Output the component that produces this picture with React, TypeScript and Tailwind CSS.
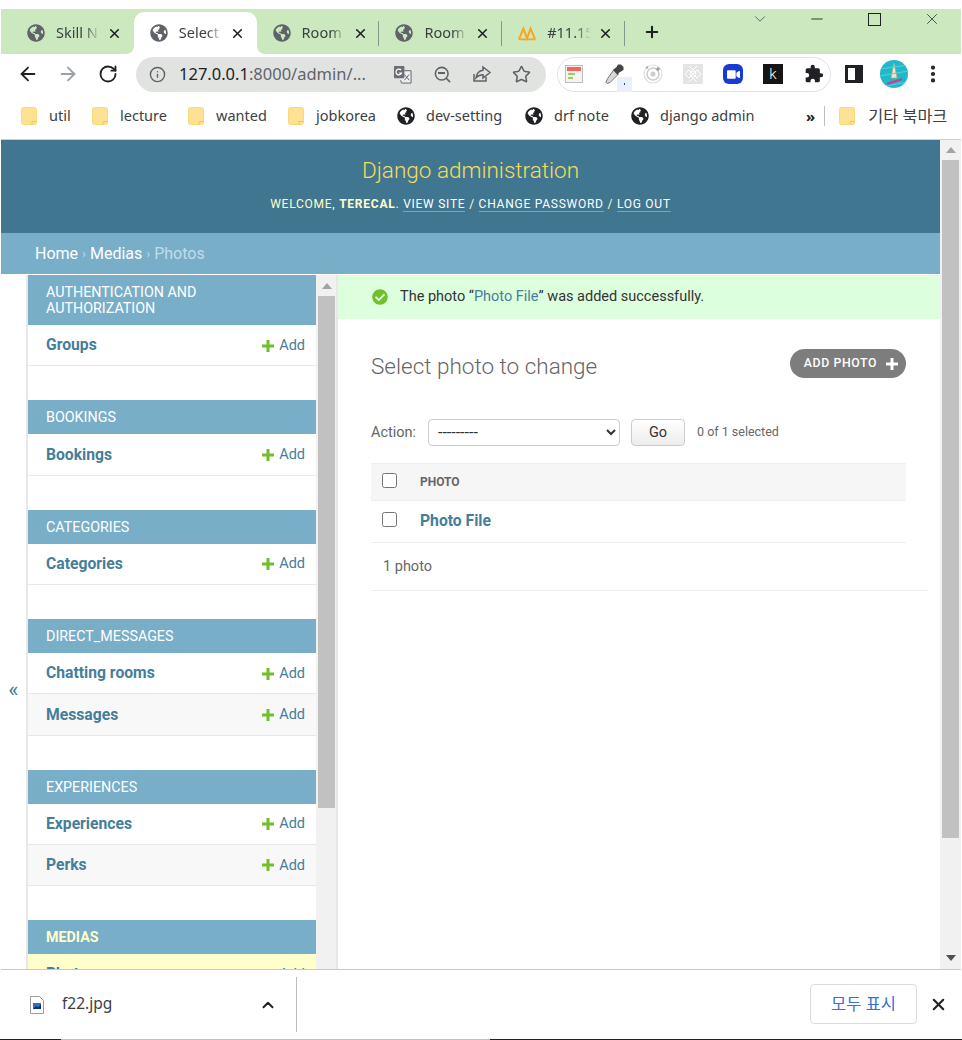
import React from "react";
import { ArrowLeft, ArrowRight, RotateCw, Info, Search, Star, EllipsisVertical, X, Plus, ChevronUp, ChevronDown, Minus } from "lucide-react";
import { FaGlobeAmericas, FaVideo, FaCheckCircle } from "react-icons/fa";

const chromeFont = "font-['Noto_Sans','Noto_Sans_CJK_KR',sans-serif]";
const roboto = "font-['Roboto','Liberation_Sans',sans-serif]";

function Tab({ label, active, icon, divider }: { label: string; active?: boolean; icon?: React.ReactNode; divider?: boolean }) {
  return (
    <div className={`relative flex items-center h-[42px] w-[122.8px] pl-4 rounded-t-[10px] ${active ? "bg-white" : ""}`}>
      {active && (
        <>
          <div className="absolute bottom-0 -left-2 w-2 h-2 bg-white">
            <div className="w-2 h-2 bg-[#cbe8bf] rounded-br-[8px]" />
          </div>
          <div className="absolute bottom-0 -right-2 w-2 h-2 bg-white">
            <div className="w-2 h-2 bg-[#cbe8bf] rounded-bl-[8px]" />
          </div>
        </>
      )}
      <div className="w-[18px] h-[18px] flex items-center justify-center shrink-0">
        {icon ?? <FaGlobeAmericas className="w-[18px] h-[18px] text-[#5f6368]" />}
      </div>
      <span className="ml-[11px] w-[44px] whitespace-nowrap overflow-hidden text-[14.5px] text-[#3c4043] [mask-image:linear-gradient(to_right,black_65%,transparent)]">
        {label}
      </span>
      <X className="ml-[7px] w-[15px] h-[15px] text-[#202124]" strokeWidth={2.6} />
      {divider && <div className="absolute right-0 top-[9px] h-[25px] w-px bg-[#85988a]" />}
    </div>
  );
}

function Folder() {
  return (
    <svg viewBox="0 0 16 18" className="w-4 h-[18px] shrink-0">
      <rect x="0.5" y="0.5" width="15" height="17" rx="2" fill="#fde293" stroke="#f9d77a" />
      <path d="M11 17.5v-3h4.5" fill="none" stroke="#f5c842" />
    </svg>
  );
}

function BM({ label, globe, w }: { label: string; globe?: boolean; w: string }) {
  return (
    <div className={`flex items-center shrink-0 ${w}`}>
      {globe ? <FaGlobeAmericas className="w-[18px] h-[18px] text-[#202124] shrink-0" /> : <Folder />}
      <span className={`${globe ? "ml-[11px]" : "ml-3"} text-[14.5px] text-[#3c4043] whitespace-nowrap`}>{label}</span>
    </div>
  );
}

function AddPlus({ color = "#70bf2b" }: { color?: string }) {
  return (
    <svg viewBox="0 0 12 12" className="w-3 h-3 shrink-0">
      <path d="M4.5 0h3v4.5H12v3H7.5V12h-3V7.5H0v-3h4.5z" fill={color} />
    </svg>
  );
}

function Row({ label, alt }: { label: string; alt?: boolean }) {
  return (
    <div className={`h-[41.2px] shrink-0 flex items-center justify-between pl-[18px] pr-[11px] border-b border-[#e8e8e8] ${alt ? "bg-[#f8f8f8]" : "bg-white"}`}>
      <span className="text-[15.7px] font-bold text-[#447e9b] leading-none">{label}</span>
      <span className="flex items-center gap-[5px] text-[14.5px] text-[#447e9b] mt-px">
        <AddPlus />
        Add
      </span>
    </div>
  );
}

function Caption({ children, tall, current }: { children: React.ReactNode; tall?: boolean; current?: boolean }) {
  return (
    <div className={`shrink-0 bg-[#79aec8] pl-[18px] pr-4 flex items-center text-[14.3px] leading-[16px] ${tall ? "h-[50px]" : "h-[34px]"} ${current ? "font-bold text-[#ffc]" : "text-white"}`}>
      <span>{children}</span>
    </div>
  );
}

function Module({ caption, rows, tall }: { caption: string; rows: string[]; tall?: boolean }) {
  return (
    <div className="shrink-0 mb-[34.2px]">
      <Caption tall={tall}>{caption}</Caption>
      {rows.map((r, i) => (
        <Row key={r} label={r} alt={i % 2 === 1} />
      ))}
    </div>
  );
}

function Arrow({ dir, color = "#a3a3a3" }: { dir: "up" | "down"; color?: string }) {
  return (
    <svg viewBox="0 0 10 6" className="w-[10px] h-[6px]">
      <path d={dir === "up" ? "M5 0l5 6H0z" : "M5 6L0 0h10z"} fill={color} />
    </svg>
  );
}

export default function App() {
  return (
    <div className={`w-[962px] h-[1040px] bg-white flex flex-col overflow-hidden ${chromeFont}`}>
      {/* Tab strip */}
      <div className="mt-[9px] ml-px mr-px h-[45px] shrink-0 bg-[#cbe8bf] flex items-end pl-[10px] relative">
        <Tab label="Skill N" />
        <Tab label="Select" active />
        <Tab label="Room" divider />
        <Tab label="Room" divider />
        <Tab
          label="#11.15"
          divider
          icon={
            <svg viewBox="0 0 20 15" className="w-[19px] h-[15px]">
              <path d="M1 14L6 2l4 11 4-11 5 12" fill="none" stroke="#f5a623" strokeWidth="2.2" />
              <path d="M1 14h18" stroke="#f5a623" strokeWidth="2" />
            </svg>
          }
        />
        <Plus className="ml-[18px] mb-[13px] w-[18px] h-[18px] text-[#202124]" strokeWidth={2.8} />
        <div className="absolute top-px left-[750px] flex items-center">
          <ChevronDown className="w-[18px] h-[18px] text-[#3c4043]" strokeWidth={1} />
          <Minus className="ml-[39px] w-[18px] h-[18px] text-[#202124]" strokeWidth={1.2} />
          <div className="ml-[42px] w-[13px] h-[13px] border border-[#202124]" />
          <X className="ml-[42px] w-[18px] h-[18px] text-[#202124]" strokeWidth={1} />
        </div>
      </div>

      {/* Toolbar */}
      <div className="h-[40px] shrink-0 ml-px mr-px flex items-center pl-[16px]">
        <ArrowLeft className="w-[22px] h-[22px] text-[#202124]" strokeWidth={2} />
        <ArrowRight className="ml-[18px] w-[22px] h-[22px] text-[#9aa0a6]" strokeWidth={2} />
        <RotateCw className="ml-[19px] w-[20px] h-[20px] text-[#202124]" strokeWidth={2.2} />
        <div className="ml-[18px] w-[410px] h-[35px] rounded-full bg-[#e1e3e1] flex items-center pl-[13px]">
          <Info className="w-[17px] h-[17px] text-[#5f6368] shrink-0" strokeWidth={2} />
          <span className="ml-[13px] text-[16.5px] text-[#5f6368] whitespace-nowrap w-[214px] shrink-0">
            <span className="text-[#202124]">127.0.0.1</span>:8000/admin/...
          </span>
          <svg viewBox="0 0 20 20" className="w-[19px] h-[19px] shrink-0">
            <path d="M8 6h11v13H9l-1-3" fill="#eceff0" stroke="#5f6368" />
            <rect x="1" y="1" width="11" height="13" rx="1" fill="#6b6f73" />
            <path d="M8.5 5.5a3 3 0 1 0 .4 3H6.5" fill="none" stroke="#fff" strokeWidth="1.3" />
            <path d="M12 10l5 6M17 10l-5 6" stroke="#5f6368" strokeWidth="1" />
          </svg>
          <span className="ml-[21px] relative flex shrink-0">
            <Search className="w-[19px] h-[19px] text-[#5f6368]" strokeWidth={2} />
            <span className="absolute left-[5px] top-[7.5px] w-[7px] h-[1.5px] bg-[#5f6368]" />
          </span>
          <svg viewBox="0 0 20 20" className="ml-[20px] w-[20px] h-[20px] shrink-0" fill="none" stroke="#5f6368" strokeWidth="1.5">
            <path d="M2 10v7h12v-4" />
            <path d="M11 3l7 5.5-7 5.5v-3.2c-3 0-5 .8-7 3 .6-4 3-7 7-7.5z" />
          </svg>
          <Star className="ml-[20px] w-[19px] h-[19px] text-[#5f6368] shrink-0" strokeWidth={2} />
        </div>
        <div className="ml-[11px] w-[274px] h-[35px] rounded-full border border-[#dfe1e5] flex items-center pl-[7px] relative shrink-0">
          <svg viewBox="0 0 18 18" className="w-[18px] h-[18px] shrink-0">
            <rect x="0.5" y="0.5" width="17" height="17" fill="#f5f5f0" stroke="#bdbdbd" />
            <rect x="2" y="2" width="14" height="4" fill="#f4635b" />
            <rect x="3" y="8" width="7" height="2" fill="#9ccc65" />
            <rect x="3" y="12" width="5" height="2" fill="#9ccc65" />
          </svg>
          <svg viewBox="0 0 20 20" className="ml-[21px] w-5 h-5 shrink-0">
            <path d="M10 5.5l4.5 4.5-8.5 8.5-3 1-1-1 1-3z" fill="#d8d8d8" stroke="#777" />
            <path d="M9 6l3.5-3 1.5-2.5h3L19.5 3v3L17 7.5l-2.5 1.5-1 2z" fill="#444" />
          </svg>
          <div className="absolute left-[59px] top-[19px] w-[15px] h-[15px] bg-[#e8f0fe] flex items-center justify-center">
            <div className="w-[1.5px] h-[1.5px] bg-[#444]" />
          </div>
          <svg viewBox="0 0 20 20" className="ml-[19px] w-5 h-5 shrink-0" fill="none">
            <circle cx="10" cy="10" r="9" stroke="#ddd" strokeWidth="1.2" />
            <circle cx="10" cy="10" r="6" stroke="#ccc" strokeWidth="1.5" />
            <circle cx="10" cy="10" r="2.5" fill="#ccc" />
            <circle cx="15" cy="5" r="1.7" fill="#999" />
            <circle cx="4" cy="3.5" r="1.2" fill="#aaa" />
          </svg>
          <svg viewBox="0 0 20 20" className="ml-[20px] w-5 h-5 shrink-0">
            <rect width="20" height="20" fill="#e4e4e4" />
            <circle cx="10" cy="10" r="3" fill="none" stroke="#fff" />
            <path d="M2 10l4-4 4 4 4-4 4 4-4 4-4-4-4 4zM6 2l4 4 4-4M6 18l4-4 4 4" fill="none" stroke="#fff" />
          </svg>
          <div className="ml-[20px] w-5 h-5 rounded-[6px] bg-[#1a3bd1] flex items-center justify-center shrink-0">
            <FaVideo className="w-[13px] h-[13px] text-white" />
          </div>
          <div className={`ml-[20px] w-5 h-5 bg-[#151515] flex items-center justify-center shrink-0 text-white text-[15px] leading-none ${roboto} font-light`}>k</div>
          <svg viewBox="0 0 24 24" className="ml-[21px] w-5 h-5 shrink-0" fill="#202124">
            <path d="M20.5 11H19V7a2 2 0 0 0-2-2h-4V3.5a2.5 2.5 0 0 0-5 0V5H4a2 2 0 0 0-2 2v3.8h1.5a2.7 2.7 0 0 1 0 5.4H2V20a2 2 0 0 0 2 2h3.8v-1.5a2.7 2.7 0 0 1 5.4 0V22H17a2 2 0 0 0 2-2v-4h1.5a2.5 2.5 0 0 0 0-5z" />
          </svg>
        </div>
        <div className="ml-[14px] w-[18px] h-[18px] border-[3px] border-[#202124] flex justify-end shrink-0">
          <div className="w-[5px] h-full bg-[#202124]" />
        </div>
        <div className="ml-[17px] w-7 h-7 rounded-full bg-[#22b8c9] overflow-hidden shrink-0">
          <svg viewBox="0 0 28 28" className="w-7 h-7">
            <path d="M14 3l3 15h-6z" fill="#f0e6c8" stroke="#c9a45c" strokeWidth="0.6" />
            <path d="M7 24l15-5" stroke="#d6358f" strokeWidth="2" />
            <path d="M0 9l28-4M0 16l28-5M0 27l28-5" stroke="#4fd3df" strokeWidth="1" />
          </svg>
        </div>
        <EllipsisVertical className="ml-[14px] w-[22px] h-[22px] text-[#202124] shrink-0" strokeWidth={2.6} />
      </div>

      {/* Bookmarks */}
      <div className="h-[46px] shrink-0 ml-px mr-px flex items-center pl-[20px] border-b border-[#cfcfcf] pb-[1px]">
        <BM label="util" w="w-[71px]" />
        <BM label="lecture" w="w-[96px]" />
        <BM label="wanted" w="w-[100px]" />
        <BM label="jobkorea" w="w-[109px]" />
        <BM label="dev-setting" globe w="w-[128px]" />
        <BM label="drf note" globe w="w-[106px]" />
        <BM label="django admin" globe w="w-[175px]" />
        <span className="text-[15px] font-bold text-[#202124] leading-none">»</span>
        <div className="ml-[9px] w-px h-[20px] bg-[#bdbdbd]" />
        <div className="ml-[14px] flex items-center">
          <Folder />
          <span className="ml-[13px] text-[16.3px] leading-none text-[#3c4043] whitespace-nowrap">기타 북마크</span>
        </div>
      </div>

      {/* Page */}
      <div className={`flex-1 min-h-0 ml-px mr-px flex ${roboto}`}>
        <div className="flex-1 min-w-0 flex flex-col">
          <div className="h-[93px] shrink-0 bg-[#417690] flex flex-col items-center">
            <div className="mt-[15px] text-[22.5px] font-light text-[#f5dd5d] leading-[30px]">Django administration</div>
            <div className="mt-[11px] text-[12px] tracking-[0.75px] text-[#ffc] uppercase leading-[16px]">
              Welcome, <strong className="font-bold">terecal</strong>.{" "}
              <span className="border-b border-[#ffffff55] text-white">View site</span> /{" "}
              <span className="border-b border-[#ffffff55] text-white">Change password</span> /{" "}
              <span className="border-b border-[#ffffff55] text-white">Log out</span>
            </div>
          </div>
          <div className="h-[41px] shrink-0 bg-[#79aec8] flex items-center pl-[34px] text-[16px] text-[#c4dce8]">
            <span className="text-white">Home</span>
            <span className="mx-[4px] text-[13px]">›</span>
            <span className="text-white">Medias</span>
            <span className="mx-[4px] text-[13px]">›</span>
            Photos
          </div>
          <div className="flex-1 min-h-0 flex pt-px">
            {/* toggle */}
            <div className="w-[25px] shrink-0 border-r-2 border-[#e8e8e8] box-content flex items-center justify-center pt-[138px]">
              <span className="text-[22px] leading-none text-[#447e9b] -mt-[2px]">«</span>
            </div>
            {/* sidebar */}
            <div className="w-[288px] shrink-0 overflow-hidden flex flex-col">
              <Module tall caption="AUTHENTICATION AND AUTHORIZATION" rows={["Groups"]} />
              <Module caption="BOOKINGS" rows={["Bookings"]} />
              <Module caption="CATEGORIES" rows={["Categories"]} />
              <Module caption="DIRECT_MESSAGES" rows={["Chatting rooms", "Messages"]} />
              <Module caption="EXPERIENCES" rows={["Experiences", "Perks"]} />
              <Caption current>MEDIAS</Caption>
              <div className="h-[41px] shrink-0 bg-[#ffc] flex items-center justify-between pl-[18px] pr-[11px] pb-[1px]">
                <span className="text-[15.7px] font-bold text-[#447e9b] leading-none">Photos</span>
                <span className="flex items-center gap-[5px] text-[14.5px] text-[#447e9b] mt-px">
                  <AddPlus />
                  Add
                </span>
              </div>
            </div>
            {/* sidebar scrollbar */}
            <div className="w-[20px] shrink-0 bg-[#f1f1f1] flex flex-col items-center pl-px">
              <div className="h-[21px] shrink-0 flex items-center justify-center">
                <Arrow dir="up" />
              </div>
              <div className="w-[17px] h-[512px] bg-[#c1c1c1]" />
            </div>
            <div className="w-[2px] shrink-0 bg-[#e8e8e8]" />
            {/* content */}
            <div className="flex-1 min-w-0 flex flex-col">
              <div className="h-[44px] shrink-0 bg-[#dfd] flex items-center pl-[34px] text-[14.5px] text-[#333]">
                <FaCheckCircle className="w-4 h-4 text-[#70bf2b] mr-[12px]" />
                <span>
                  The photo “<span className="text-[#447e9b]">Photo File</span>” was added successfully.
                </span>
              </div>
              <div className="pl-[33px] pr-[12px] flex-1 flex flex-col">
                <div className="mt-[30px] pr-[22px] flex items-start justify-between">
                  <h1 className="mt-[1px] text-[22.5px] font-light text-[#666] leading-[32px]">Select photo to change</h1>
                  <div className="h-[29px] pl-[14px] pr-[8px] rounded-full bg-[#7d7d7d] flex items-center gap-[9px] text-[12.3px] font-medium tracking-[0.6px] text-white">
                    ADD PHOTO
                    <AddPlus color="#fff" />
                  </div>
                </div>
                <div className="mt-[37px] pr-[22px] flex items-center h-[27px]">
                  <span className="text-[14.5px] text-[#666] w-[57px] shrink-0">Action:</span>
                  <select className="w-[192px] h-[27px] bg-white border border-[#ccc] rounded-[4px] pl-[5px] text-[16px] text-[#333]">
                    <option>---------</option>
                  </select>
                  <div className="ml-[11px] w-[54px] h-[27px] rounded-[4px] border border-[#ccc] bg-gradient-to-b from-[#fff] to-[#ececec] flex items-center justify-center text-[14.5px] text-[#333]">
                    Go
                  </div>
                  <span className="ml-[12px] text-[12.5px] text-[#666]">0 of 1 selected</span>
                </div>
                <div className="mt-[17px] mr-[22px] h-[38px] shrink-0 bg-[#f6f6f6] border-y border-[#eee] flex items-center pl-[11px]">
                  <input type="checkbox" className="w-[15px] h-[15px] -mt-[4px] shrink-0" />
                  <span className="ml-[23px] text-[12px] font-bold text-[#666]">PHOTO</span>
                </div>
                <div className="mr-[22px] h-[42px] shrink-0 border-b border-[#eee] flex items-center pl-[11px]">
                  <input type="checkbox" className="w-[15px] h-[15px] -mt-[4px] shrink-0" />
                  <span className="ml-[23px] text-[15.7px] font-bold text-[#447e9b] -mt-[2px]">Photo File</span>
                </div>
                <div className="h-[48px] shrink-0 border-b border-[#eee] flex items-center pl-[12px] text-[14.5px] text-[#666]">1 photo</div>
              </div>
            </div>
          </div>
        </div>
        {/* page scrollbar */}
        <div className="w-[21px] shrink-0 bg-[#f1f1f1] flex flex-col items-start pl-[2px]">
          <div className="w-[17px] h-[20px] shrink-0 flex items-center justify-center">
            <Arrow dir="up" />
          </div>
          <div className="w-[17px] h-[678px] bg-[#c1c1c1]" />
          <div className="w-[17px] flex-1 flex items-end justify-center pb-[8px]">
            <Arrow dir="down" color="#505050" />
          </div>
        </div>
      </div>

      {/* Download bar */}
      <div className="h-[70px] shrink-0 ml-px mr-px border-t border-[#c8c8c8] flex items-center pl-[29px] pr-[13px]">
        <svg viewBox="0 0 14 18" className="w-[14px] h-[18px] shrink-0">
          <path d="M.5.5h9l4 4v13H.5z" fill="#fff" stroke="#9e9e9e" />
          <rect x="3" y="7" width="8" height="6" fill="#2f6fc4" />
          <path d="M3 13l3-3 2 1.5 3-3V13z" fill="#0d2f6b" />
        </svg>
        <span className="ml-[18px] text-[15.5px] text-[#3c4043] -mt-px">f22.jpg</span>
        <ChevronUp className="ml-[147px] w-[18px] h-[18px] text-[#202124]" strokeWidth={2.6} />
        <div className="ml-[19px] w-px h-[55px] bg-[#bdbdbd]" />
        <div className="ml-auto w-[107px] h-[40px] rounded-[4px] border border-[#dadce0] flex items-center justify-center text-[16.5px] text-[#3a6fd8] -mt-[1px]">
          모두 표시
        </div>
        <X className="ml-[12px] w-[19px] h-[19px] text-[#202124]" strokeWidth={2.6} />
      </div>
      <div className="h-px shrink-0 flex">
        <div className="w-[61px] bg-[#202124]" />
        <div className="w-[429px] bg-[#bdbdbd]" />
        <div className="flex-1 bg-[#202124]" />
      </div>
    </div>
  );
}
